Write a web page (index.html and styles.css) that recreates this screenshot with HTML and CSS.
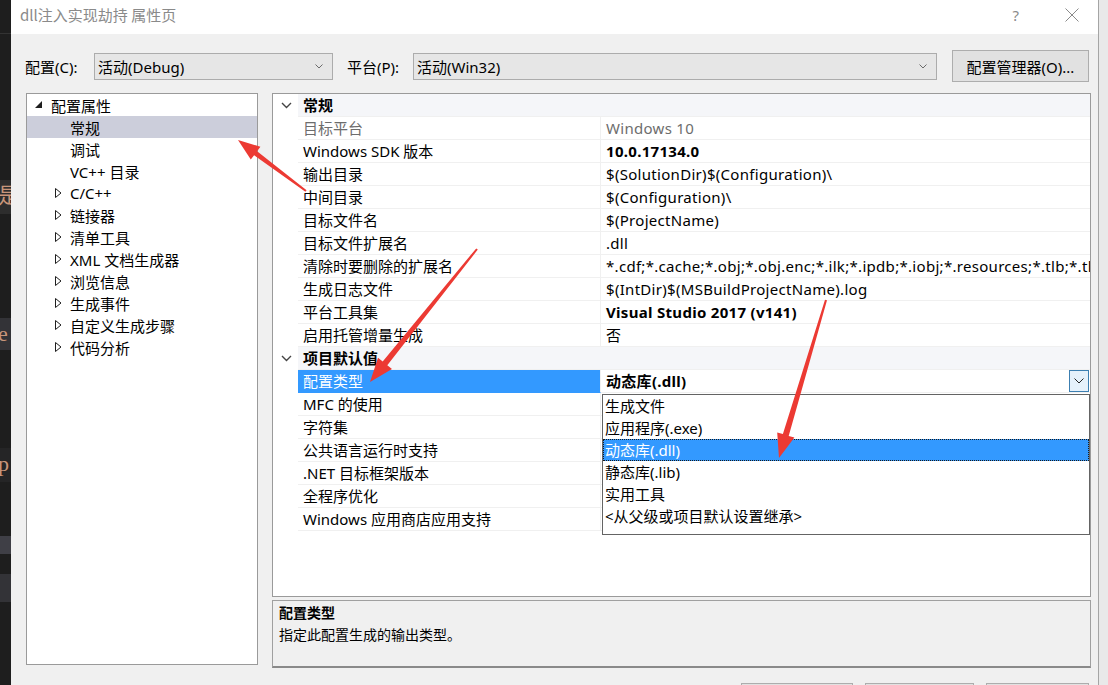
FILE: index.html
```html
<!DOCTYPE html>
<html lang="zh-CN">
<head>
<meta charset="utf-8">
<title>dll注入实现劫持 属性页</title>
<link rel="stylesheet" href="styles.css">
</head>
<body>
<div class="screen">
  <div class="strip-left">
    <div class="band band-top"></div>
    <div class="band band-a"><span class="ghost">是</span></div>
    <div class="band band-b"><span class="ghost">e</span></div>
    <div class="band band-c"><span class="ghost">p</span></div>
    <div class="band band-d"></div>
    <div class="band band-e"></div>
  </div>
  <div class="dialog">
    <div class="titlebar">
      <span class="title">dll注入实现劫持 属性页</span>
      <span class="tb-help">?</span>
      <svg class="tb-close" width="14" height="14" viewBox="0 0 14 14"><path d="M0.5 0.5 L13.5 13.5 M13.5 0.5 L0.5 13.5" stroke="#8a8a8a" stroke-width="1" fill="none"/></svg>
    </div>
    <div class="body">
      <div class="config-row">
        <span class="cfg-label cfg-label-1">配置(C):</span>
        <div class="combo combo-1"><span>活动(Debug)</span><svg class="combo-chev" width="8" height="5" viewBox="0 0 8 5"><path d="M0.5 0.5 L4 4 L7.5 0.5" stroke="#6a6a6a" fill="none"/></svg></div>
        <span class="cfg-label cfg-label-2">平台(P):</span>
        <div class="combo combo-2"><span>活动(Win32)</span><svg class="combo-chev" width="8" height="5" viewBox="0 0 8 5"><path d="M0.5 0.5 L4 4 L7.5 0.5" stroke="#6a6a6a" fill="none"/></svg></div>
        <div class="btn cfg-mgr">配置管理器(O)...</div>
      </div>
      <div class="main">
        <div class="tree">
          <div class="t-row lvl0"><svg class="tri-open" width="8" height="8" viewBox="0 0 8 8"><polygon points="0,7 7,0 7,7" fill="#1e1e1e"/></svg><span>配置属性</span></div>
          <div class="t-row leaf selected"><span>常规</span></div>
          <div class="t-row leaf"><span>调试</span></div>
          <div class="t-row leaf"><span>VC++ 目录</span></div>
          <div class="t-row lvl1"><svg class="tri-closed" width="7" height="10" viewBox="0 0 7 10"><polygon points="0.5,0.5 6,5 0.5,9.5" fill="none" stroke="#1e1e1e"/></svg><span>C/C++</span></div>
          <div class="t-row lvl1"><svg class="tri-closed" width="7" height="10" viewBox="0 0 7 10"><polygon points="0.5,0.5 6,5 0.5,9.5" fill="none" stroke="#1e1e1e"/></svg><span>链接器</span></div>
          <div class="t-row lvl1"><svg class="tri-closed" width="7" height="10" viewBox="0 0 7 10"><polygon points="0.5,0.5 6,5 0.5,9.5" fill="none" stroke="#1e1e1e"/></svg><span>清单工具</span></div>
          <div class="t-row lvl1"><svg class="tri-closed" width="7" height="10" viewBox="0 0 7 10"><polygon points="0.5,0.5 6,5 0.5,9.5" fill="none" stroke="#1e1e1e"/></svg><span>XML 文档生成器</span></div>
          <div class="t-row lvl1"><svg class="tri-closed" width="7" height="10" viewBox="0 0 7 10"><polygon points="0.5,0.5 6,5 0.5,9.5" fill="none" stroke="#1e1e1e"/></svg><span>浏览信息</span></div>
          <div class="t-row lvl1"><svg class="tri-closed" width="7" height="10" viewBox="0 0 7 10"><polygon points="0.5,0.5 6,5 0.5,9.5" fill="none" stroke="#1e1e1e"/></svg><span>生成事件</span></div>
          <div class="t-row lvl1"><svg class="tri-closed" width="7" height="10" viewBox="0 0 7 10"><polygon points="0.5,0.5 6,5 0.5,9.5" fill="none" stroke="#1e1e1e"/></svg><span>自定义生成步骤</span></div>
          <div class="t-row lvl1"><svg class="tri-closed" width="7" height="10" viewBox="0 0 7 10"><polygon points="0.5,0.5 6,5 0.5,9.5" fill="none" stroke="#1e1e1e"/></svg><span>代码分析</span></div>
        </div>
        <div class="right-col">
          <div class="grid">
            <div class="g-row cat">
              <div class="gutter"><svg width="11" height="7" viewBox="0 0 11 7"><path d="M1 1 L5.5 5.5 L10 1" stroke="#444" stroke-width="1.4" fill="none"/></svg></div>
              <div class="cat-name">常规</div>
            </div>
            <div class="g-row"><div class="gutter"></div><div class="name dim">目标平台</div><div class="val dim">Windows 10</div></div>
            <div class="g-row"><div class="gutter"></div><div class="name">Windows SDK 版本</div><div class="val bold">10.0.17134.0</div></div>
            <div class="g-row"><div class="gutter"></div><div class="name">输出目录</div><div class="val">$(SolutionDir)$(Configuration)\</div></div>
            <div class="g-row"><div class="gutter"></div><div class="name">中间目录</div><div class="val">$(Configuration)\</div></div>
            <div class="g-row"><div class="gutter"></div><div class="name">目标文件名</div><div class="val">$(ProjectName)</div></div>
            <div class="g-row"><div class="gutter"></div><div class="name">目标文件扩展名</div><div class="val">.dll</div></div>
            <div class="g-row"><div class="gutter"></div><div class="name">清除时要删除的扩展名</div><div class="val">*.cdf;*.cache;*.obj;*.obj.enc;*.ilk;*.ipdb;*.iobj;*.resources;*.tlb;*.tli;*.tlh;*.tmp;*.rsp;*.pgc;*.pgd;*.meta;*.tlog;*.manifest;*.res;*.pch;*.exp;*.idb;*.rep;*.xdc;*.pdb</div></div>
            <div class="g-row"><div class="gutter"></div><div class="name">生成日志文件</div><div class="val">$(IntDir)$(MSBuildProjectName).log</div></div>
            <div class="g-row"><div class="gutter"></div><div class="name">平台工具集</div><div class="val bold">Visual Studio 2017 (v141)</div></div>
            <div class="g-row"><div class="gutter"></div><div class="name">启用托管增量生成</div><div class="val">否</div></div>
            <div class="g-row cat">
              <div class="gutter"><svg width="11" height="7" viewBox="0 0 11 7"><path d="M1 1 L5.5 5.5 L10 1" stroke="#444" stroke-width="1.4" fill="none"/></svg></div>
              <div class="cat-name">项目默认值</div>
            </div>
            <div class="g-row sel"><div class="gutter"></div><div class="name">配置类型</div><div class="val bold val-edit"><span>动态库(.dll)</span><span class="dd-btn"><svg width="10" height="6" viewBox="0 0 10 6"><path d="M0.5 0.5 L5 5 L9.5 0.5" stroke="#222" fill="none"/></svg></span></div></div>
            <div class="g-row"><div class="gutter"></div><div class="name">MFC 的使用</div><div class="val"></div></div>
            <div class="g-row"><div class="gutter"></div><div class="name">字符集</div><div class="val"></div></div>
            <div class="g-row"><div class="gutter"></div><div class="name">公共语言运行时支持</div><div class="val"></div></div>
            <div class="g-row"><div class="gutter"></div><div class="name">.NET 目标框架版本</div><div class="val"></div></div>
            <div class="g-row"><div class="gutter"></div><div class="name">全程序优化</div><div class="val"></div></div>
            <div class="g-row"><div class="gutter"></div><div class="name">Windows 应用商店应用支持</div><div class="val"></div></div>

            <div class="popup">
              <div class="p-item">生成文件</div>
              <div class="p-item">应用程序(.exe)</div>
              <div class="p-item p-sel">动态库(.dll)</div>
              <div class="p-item">静态库(.lib)</div>
              <div class="p-item">实用工具</div>
              <div class="p-item">&lt;从父级或项目默认设置继承&gt;</div>
            </div>
          </div>
          <div class="desc">
            <div class="desc-title">配置类型</div>
            <div class="desc-text">指定此配置生成的输出类型。</div>
          </div>
        </div>
      </div>
      <div class="footer">
        <div class="btn fbtn fb1">确定</div>
        <div class="btn fbtn fb2">取消</div>
        <div class="btn fbtn fb3">应用(A)</div>
      </div>
    </div>
  </div>
  <div class="strip-right"></div>

  <svg class="arrows" width="1108" height="685" viewBox="0 0 1108 685">
    <polygon fill="#ec3a33" points="306.6,190.2 257.1,151.2 260.4,146.8 238,140 250.8,159.6 254.1,155.2 305.4,191.8"/>
    <polygon fill="#ec3a33" points="476.2,248.4 382.7,361.4 378.0,357.7 370,382 392.0,368.9 387.3,365.2 477.8,249.6"/>
    <polygon fill="#ec3a33" points="825.0,299.7 782.9,434.1 777.2,432.4 779,458 794.4,437.6 788.7,435.9 827.0,300.3"/>
  </svg>
</div>
</body>
</html>
```

FILE: styles.css
```css
* { box-sizing: border-box; }
html, body { margin: 0; padding: 0; }
body {
  width: 1108px;
  height: 685px;
  overflow: hidden;
  background: #1e1e1e;
  font-family: "Noto Sans", "Noto Sans CJK SC", sans-serif;
  font-size: 15px;
  color: #000;
}
.screen {
  position: relative;
  display: flex;
  width: 1108px;
  height: 685px;
  overflow: hidden;
}

/* left background strip (editor behind the dialog) */
.strip-left {
  flex: none;
  width: 11px;
  background: #1e1e1e;
  overflow: hidden;
  display: flex;
  flex-direction: column;
}
.band { flex: none; width: 11px; overflow: hidden; }
.band-top { height: 34px; border-bottom: 1px solid #333; }
.band-a { margin-top: 146px; height: 34px; background: #2d2d2d; }
.band-b { margin-top: 104px; height: 32px; background: #333337; }
.band-c { margin-top: 98px; height: 34px; background: #252526; }
.band-d { margin-top: 54px; height: 18px; background: #3f3f46; }
.band-e { margin-top: 20px; height: 28px; background: #333337; }
.ghost {
  display: block;
  font-family: "Liberation Serif", serif;
  font-size: 22px;
  line-height: 32px;
  color: #c8957a;
  margin-left: -2px;
}

/* dialog */
.dialog {
  flex: none;
  width: 1087px;
  background: #f0f0f0;
  display: flex;
  flex-direction: column;
}
.strip-right {
  flex: 1;
  background: #e9e9e9;
  border-left: 1px solid #a5a5a5;
}

.titlebar {
  flex: none;
  height: 34px;
  background: #fff;
  display: flex;
  align-items: center;
  padding-left: 9px;
  padding-bottom: 5px;
}
.title {
  font-family: "Noto Sans CJK SC", sans-serif;
  font-size: 15px;
  color: #8a8a8a;
}
.tb-help {
  margin-left: auto;
  color: #8a8a8a;
  font-size: 15px;
  font-family: "Noto Sans", sans-serif;
}
.tb-close {
  margin-left: 46px;
  margin-right: 19px;
}

.body {
  flex: 1;
  display: flex;
  flex-direction: column;
  padding: 0 6px 0 15px;
}

/* configuration row */
.config-row {
  flex: none;
  margin-top: 16px;
  height: 32px;
  display: flex;
  align-items: center;
}
.cfg-label { white-space: nowrap; }
.cfg-label-1 { width: 69px; margin-left: -1px; }
.cfg-label-2 { width: 66px; margin-left: 14px; }
.combo {
  height: 27px;
  background: #e6e6e6;
  border: 1px solid #acacac;
  display: flex;
  align-items: center;
  padding-left: 3px;
  padding-right: 9px;
}
.combo span { flex: 1; }
.combo-1 { width: 239px; }
.combo-2 { width: 524px; }
.btn {
  background: #e1e1e1;
  border: 1px solid #adadad;
  display: flex;
  align-items: center;
  justify-content: center;
}
.cfg-mgr {
  width: 137px;
  height: 32px;
  margin-left: 15px;
}

/* main */
.main {
  flex: none;
  margin-top: 11px;
  display: flex;
  gap: 14px;
  align-items: flex-start;
}
.tree {
  flex: none;
  width: 232px;
  height: 572px;
  background: #fff;
  border: 1px solid #9a9a9a;
}
.t-row {
  height: 22px;
  display: flex;
  align-items: center;
  white-space: nowrap;
}
.lvl0 { padding-left: 8px; }
.lvl0 span { margin-left: 8px; }
.leaf { padding-left: 43px; }
.lvl1 { padding-left: 28px; }
.lvl1 span { margin-left: 8px; }
.t-row.selected { background: #cccedb; }

.right-col {
  flex: none;
  width: 819px;
  display: flex;
  flex-direction: column;
}
.grid {
  position: relative;
  height: 504px;
  background: #fff;
  border: 1px solid #9a9a9a;
  overflow: hidden;
}
.g-row {
  display: grid;
  grid-template-columns: 25px 303px 1fr;
  height: 23px;
}
.gutter {
  display: flex;
  align-items: center;
  justify-content: center;
  padding-left: 2px;
}
.name, .val, .cat-name {
  line-height: 22px;
  border-bottom: 1px solid #f0f0f0;
  white-space: nowrap;
  overflow: hidden;
}
.name {
  padding-left: 5px;
  border-right: 1px solid #f0f0f0;
}
.val {
  padding-left: 5px;
  letter-spacing: 0.3px;
}
.cat-name {
  grid-column: 2 / 4;
  font-weight: bold;
  padding-left: 5px;
  background: #f5f6f9;
}
.dim { color: #6d6d6d; }
.bold { font-weight: bold; }
.g-row.sel .name {
  background: #3399ff;
  color: #fff;
  border-bottom-color: #3399ff;
}
.val-edit {
  display: flex;
  align-items: center;
  padding-right: 1px;
}
.val-edit span:first-child { flex: 1; }
.dd-btn {
  width: 20px;
  height: 22px;
  background: #e5f1fb;
  border: 1px solid #3c7fb1;
  display: flex;
  align-items: center;
  justify-content: center;
}

.popup {
  position: absolute;
  left: 329px;
  top: 300px;
  width: 488px;
  height: 141px;
  background: #fff;
  border: 1px solid #646464;
}
.p-item {
  height: 22px;
  line-height: 22px;
  padding-left: 2px;
  white-space: nowrap;
}
.p-sel {
  background: #3399ff;
  color: #fff;
  outline: 1px dotted #1a1a1a;
  outline-offset: -1px;
}

.desc {
  margin-top: 3px;
  height: 68px;
  background: #f0f0f0;
  border: 1px solid #a0a0a0;
  border-bottom: 2px solid #8a8a8a;
  padding-left: 6px;
  font-family: "Noto Sans CJK SC", sans-serif;
  font-size: 14px;
  line-height: 22px;
}
.desc-title { font-weight: bold; }

.footer {
  flex: none;
  margin-top: 15px;
  display: flex;
  justify-content: flex-end;
  gap: 12px;
  padding-right: 3px;
}
.fbtn { height: 30px; }
.fb1 { width: 112px; }
.fb2 { width: 109px; }
.fb3 { width: 103px; }

.arrows {
  position: absolute;
  left: 0;
  top: 0;
  pointer-events: none;
}
```
